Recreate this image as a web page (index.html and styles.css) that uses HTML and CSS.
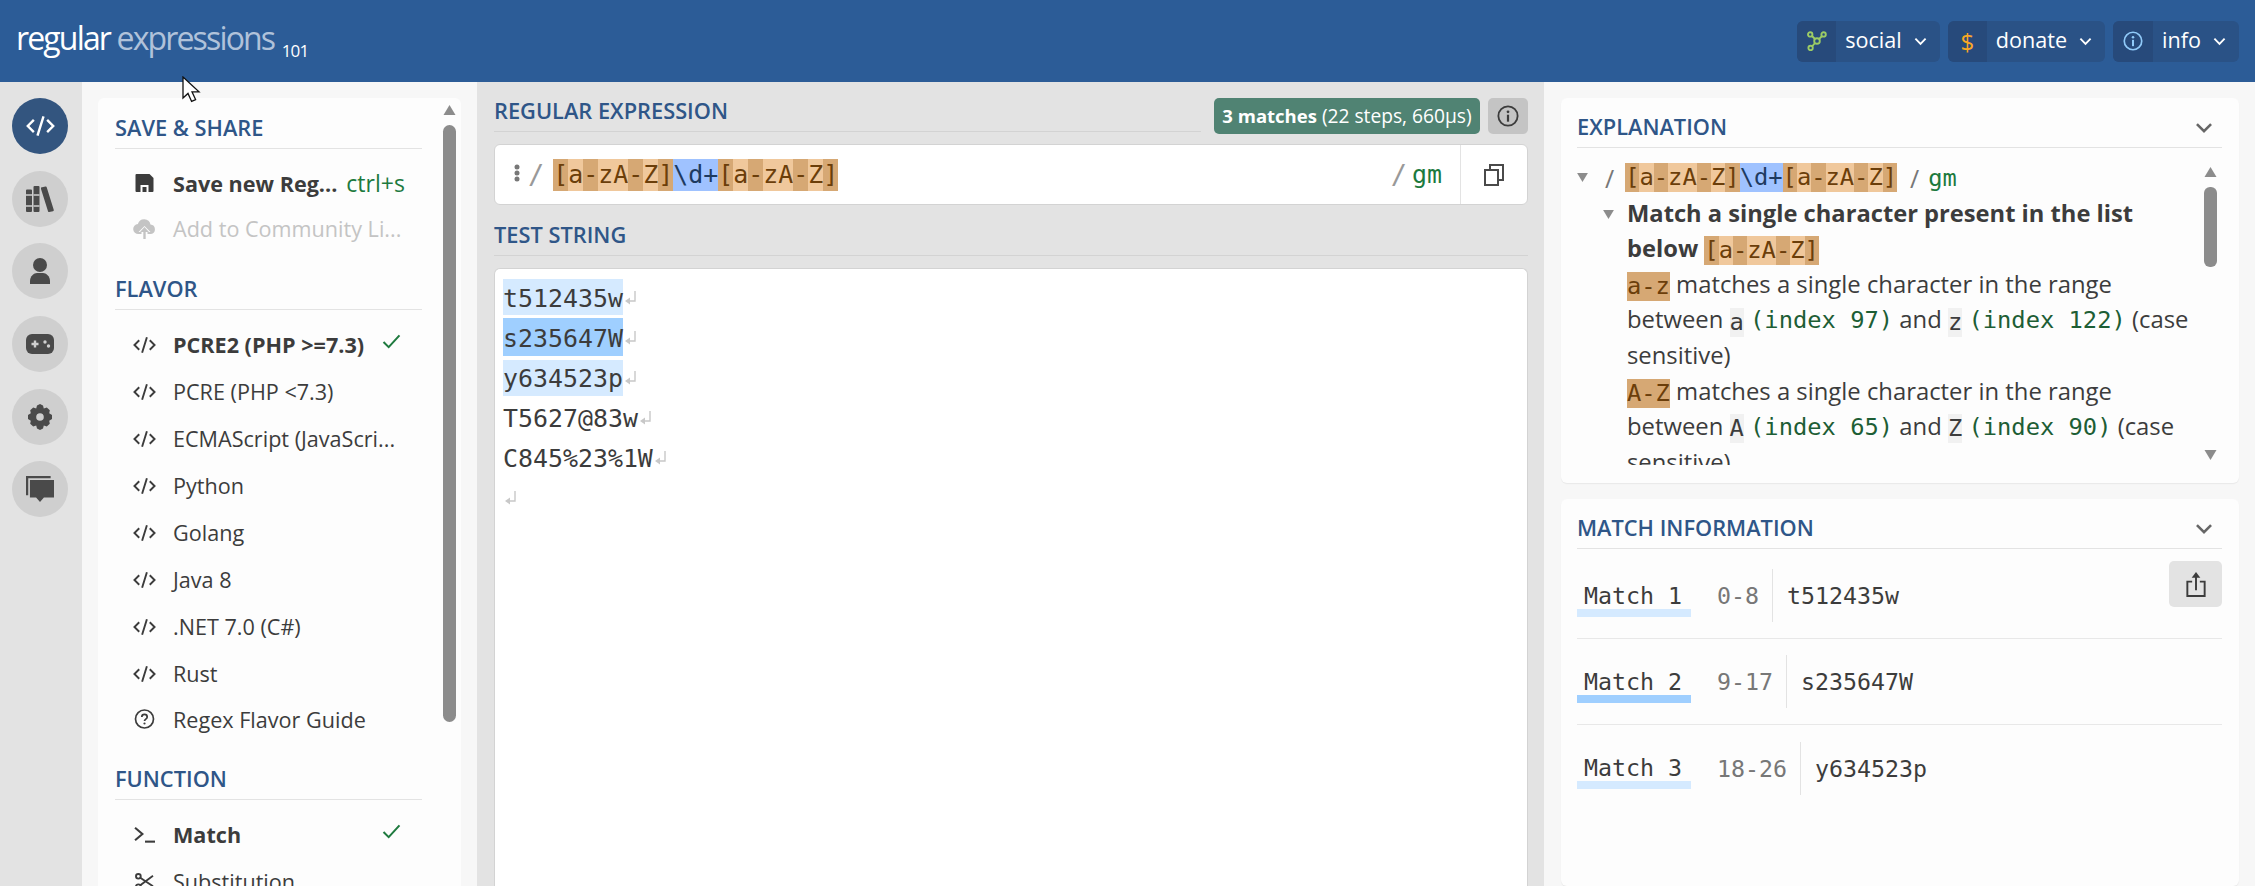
FILE: index.html
```html
<!DOCTYPE html>
<html lang="en">
<head>
<meta charset="utf-8">
<title>regex101</title>
<link rel="stylesheet" href="styles.css">
</head>
<body>
<svg class="defs" width="0" height="0" aria-hidden="true">
  <symbol id="i-code" viewBox="0 0 24 18"><path d="M6.5 4 1.5 9l5 5M17.5 4l5 5-5 5M14.5 1l-5 16" fill="none" stroke="currentColor" stroke-width="2"/></symbol>
  <symbol id="i-check" viewBox="0 0 20 16"><path d="M1.5 8.5 7 14 18.5 1.5" fill="none" stroke="currentColor" stroke-width="2.2"/></symbol>
  <symbol id="i-info" viewBox="0 0 24 24"><circle cx="12" cy="12" r="10.5" fill="none" stroke="currentColor" stroke-width="2"/><circle cx="12" cy="7.4" r="1.5" fill="currentColor"/><rect x="10.8" y="10.6" width="2.4" height="7.6" fill="currentColor"/></symbol>
  <symbol id="i-chev" viewBox="0 0 14 9"><path d="M1.5 1.5 7 7l5.5-5.5" fill="none" stroke="currentColor" stroke-width="2"/></symbol>
  <symbol id="i-tri" viewBox="0 0 12 10"><path d="M0 0h12L6 10z" fill="currentColor"/></symbol>
  <symbol id="i-ret" viewBox="0 0 11 14"><path d="M10 0v10H2" fill="none" stroke="currentColor" stroke-width="1.400"/><path d="M5 6.500v7L0 10z" fill="currentColor"/></symbol>
</svg>

<header class="topbar">
  <div class="logo"><span class="logo-a">regular</span> <span class="logo-b">expressions</span> <span class="logo-c">101</span></div>
  <nav class="topnav">
    <div class="tbtn">
      <span class="tbtn-ic"><svg class="ic-social" viewBox="0 0 20 20"><g fill="none" stroke="currentColor" stroke-width="1.9"><circle cx="3.2" cy="3.4" r="2.2"/><circle cx="16.6" cy="3.4" r="2.2"/><circle cx="3.6" cy="17" r="2.2"/><circle cx="10" cy="10" r="2.8"/><path d="M5 5l3 3M15 5l-3 3.2M5 15.5l3-3.5"/></g></svg></span>
      <span class="tbtn-lb">social</span>
      <svg class="tbtn-ch"><use href="#i-chev"/></svg>
    </div>
    <div class="tbtn">
      <span class="tbtn-ic ic-dollar">$</span>
      <span class="tbtn-lb">donate</span>
      <svg class="tbtn-ch"><use href="#i-chev"/></svg>
    </div>
    <div class="tbtn">
      <span class="tbtn-ic tbtn-ic-wide"><svg class="ic-infotop"><use href="#i-info"/></svg></span>
      <span class="tbtn-lb">info</span>
      <svg class="tbtn-ch"><use href="#i-chev"/></svg>
    </div>
  </nav>
</header>

<svg class="cursor" viewBox="0 0 20 28"><path d="M1 1v21l5-4.600 3.600 8 4-1.800-3.600-7.800 7 0z" fill="#fff" stroke="#111" stroke-width="1.300"/></svg>

<main class="layout">
  <aside class="rail">
    <div class="rail-btn rail-on"><svg class="rail-code"><use href="#i-code"/></svg></div>
    <div class="rail-btn"><svg class="rail-ic" viewBox="0 0 28 26"><path fill="currentColor" d="M0 4.500a1 1 0 0 1 1-1h4a1 1 0 0 1 1 1V25a1 1 0 0 1-1 1H1a1 1 0 0 1-1-1zM7.500 1a1 1 0 0 1 1-1h4a1 1 0 0 1 1 1v24a1 1 0 0 1-1 1h-4a1 1 0 0 1-1-1zM15 1.500l4.500-1a1 1 0 0 1 1.200.8L27.800 24a1 1 0 0 1-.8 1.200l-3.800.8a1 1 0 0 1-1.200-.8L15 3z"/><path stroke="#cfcfcf" stroke-width="1.500" d="M0 9h6M0 20h6M7.500 9h6M7.500 20h6"/></svg></div>
    <div class="rail-btn"><svg class="rail-ic rail-user" viewBox="0 0 20 26"><circle cx="10" cy="7" r="7" fill="currentColor"/><path fill="currentColor" d="M0 26v-3c0-5 4-8 7-8h6c3 0 7 3 7 8v3z"/></svg></div>
    <div class="rail-btn"><svg class="rail-ic" viewBox="0 0 28 20"><rect width="28" height="20" rx="6" fill="currentColor"/><path stroke="#cfcfcf" stroke-width="2.400" d="M5.500 10h7M9 6.500v7"/><circle cx="19" cy="8" r="1.700" fill="#cfcfcf"/><circle cx="22.500" cy="12" r="1.700" fill="#cfcfcf"/></svg></div>
    <div class="rail-btn"><svg class="rail-ic rail-cog" viewBox="0 0 24 26"><path fill="currentColor" fill-rule="evenodd" d="M12 0l3 1.500.8 3 3-.9 3 2.600-.6 3.100L24 11v4l-2.800 1.700.6 3.100-3 2.600-3-.9-.8 3L12 26l-3-1.500-.8-3-3 .9-3-2.600.6-3.100L0 15v-4l2.800-1.700-.6-3.100 3-2.600 3 .9.8-3zM12 9.200a3.800 3.800 0 1 0 0 7.600 3.800 3.800 0 0 0 0-7.600z"/></svg></div>
    <div class="rail-btn"><svg class="rail-ic" viewBox="0 0 25 23"><path fill="currentColor" d="M3.500 3.500H25v15.500h-9l-3.500 4-3.500-4H3.500z"/><path fill="currentColor" d="M0 0h22v2H2v15H0z"/></svg></div>
  </aside>

  <section class="side">
    <div class="side-card">
      <div class="scroll-up"><svg><use href="#i-tri"/></svg></div>
      <div class="scroll-thumb"></div>

      <h2 class="hd">SAVE &amp; SHARE</h2>
      <ul class="list">
        <li class="item item-save"><svg class="it-ic it-sm" viewBox="0 0 18 18"><path fill="currentColor" fill-rule="evenodd" d="M1 0h13l4 4v13a1 1 0 0 1-1 1H1a1 1 0 0 1-1-1V1a1 1 0 0 1 1-1zm4 11v7h8v-7z"/><rect x="7" y="13" width="4" height="5" fill="currentColor"/></svg><b class="it-bold">Save new Reg...</b><span class="kbd">ctrl+s</span></li>
        <li class="item item-add"><svg class="it-ic it-cloud" viewBox="0 0 22 20"><path fill="currentColor" d="M5 15a5 5 0 0 1-.6-10A6.500 6.500 0 0 1 17 5.500 4.800 4.800 0 0 1 17.500 15H14v-2h3l-6-6-6 6h3v2z"/><path fill="currentColor" d="M9.800 11h2.400v9H9.800z"/><path fill="currentColor" d="M11 8l4.500 5h-9z"/></svg><span>Add to Community Li...</span></li>
      </ul>

      <h2 class="hd hd-next">FLAVOR</h2>
      <ul class="list">
        <li class="item"><svg class="it-ic it-code"><use href="#i-code"/></svg><b class="it-bold">PCRE2 (PHP &gt;=7.3)</b><svg class="it-check"><use href="#i-check"/></svg></li>
        <li class="item"><svg class="it-ic it-code"><use href="#i-code"/></svg><span>PCRE (PHP &lt;7.3)</span></li>
        <li class="item"><svg class="it-ic it-code"><use href="#i-code"/></svg><span>ECMAScript (JavaScri...</span></li>
        <li class="item"><svg class="it-ic it-code"><use href="#i-code"/></svg><span>Python</span></li>
        <li class="item"><svg class="it-ic it-code"><use href="#i-code"/></svg><span>Golang</span></li>
        <li class="item"><svg class="it-ic it-code"><use href="#i-code"/></svg><span>Java 8</span></li>
        <li class="item"><svg class="it-ic it-code"><use href="#i-code"/></svg><span>.NET 7.0 (C#)</span></li>
        <li class="item"><svg class="it-ic it-code"><use href="#i-code"/></svg><span>Rust</span></li>
        <li class="item item-guide"><svg class="it-ic it-help" viewBox="0 0 20 20"><circle cx="10" cy="10" r="9" fill="none" stroke="currentColor" stroke-width="1.700"/><path d="M7.300 8c0-3.400 5.400-3.400 5.400 0 0 2.200-2.700 2-2.700 4" fill="none" stroke="currentColor" stroke-width="1.700"/><circle cx="10" cy="14.500" r="1.100" fill="currentColor"/></svg><span>Regex Flavor Guide</span></li>
      </ul>

      <h2 class="hd hd-next">FUNCTION</h2>
      <ul class="list">
        <li class="item"><svg class="it-ic it-term" viewBox="0 0 20 16"><path d="M1 1.500 8 7.500l-7 6" fill="none" stroke="currentColor" stroke-width="2"/><path d="M10.500 14.800H20" stroke="currentColor" stroke-width="2"/></svg><b class="it-bold">Match</b><svg class="it-check"><use href="#i-check"/></svg></li>
        <li class="item"><svg class="it-ic it-term" viewBox="0 0 20 18"><circle cx="3.500" cy="3.500" r="2.500" fill="none" stroke="currentColor" stroke-width="2"/><circle cx="3.500" cy="14.500" r="2.500" fill="none" stroke="currentColor" stroke-width="2"/><path d="M5.500 5 19 14M5.500 13 19 3" stroke="currentColor" stroke-width="2"/></svg><span>Substitution</span></li>
      </ul>
    </div>
  </section>

  <section class="mid">
    <div class="mid-top">
      <h2 class="hd hd-grow">REGULAR EXPRESSION</h2>
      <div class="badge"><b>3 matches</b> (22 steps, 660µs)</div>
      <div class="info-btn"><svg><use href="#i-info"/></svg></div>
    </div>
    <div class="regex-box">
      <svg class="dots" viewBox="0 0 6 18"><circle cx="3" cy="3" r="2.500"/><circle cx="3" cy="9" r="2.500"/><circle cx="3" cy="15" r="2.500"/></svg>
      <span class="slash slash-open">/</span>
      <div class="regex-text mono"><span class="d">[</span><span class="l">a</span><span class="d">-</span><span class="l">zA</span><span class="d">-</span><span class="l">Z</span><span class="d">]</span><span class="b">\d+</span><span class="d">[</span><span class="l">a</span><span class="d">-</span><span class="l">zA</span><span class="d">-</span><span class="l">Z</span><span class="d">]</span></div>
      <span class="slash slash-close">/</span>
      <span class="flags mono">gm</span>
      <div class="copy"><svg viewBox="0 0 20 22"><path fill="none" stroke="currentColor" stroke-width="2" d="M1 6h13v15H1zM6 6V1h13v15h-5"/></svg></div>
    </div>
    <h2 class="hd hd-test">TEST STRING</h2>
    <div class="test-box mono">
      <div class="line"><span class="m m1">t512435w</span><svg class="ret"><use href="#i-ret"/></svg></div>
      <div class="line"><span class="m m2">s235647W</span><svg class="ret"><use href="#i-ret"/></svg></div>
      <div class="line"><span class="m m3">y634523p</span><svg class="ret"><use href="#i-ret"/></svg></div>
      <div class="line"><span>T5627@83w</span><svg class="ret"><use href="#i-ret"/></svg></div>
      <div class="line"><span>C845%23%1W</span><svg class="ret"><use href="#i-ret"/></svg></div>
      <div class="line"><svg class="ret"><use href="#i-ret"/></svg></div>
    </div>
  </section>

  <section class="right">
    <div class="rcard rcard-ex">
      <h2 class="hd hd-ch">EXPLANATION<svg class="card-ch"><use href="#i-chev"/></svg></h2>
      <div class="ex-scroll">
        <div class="ex-sb ex-up"><svg><use href="#i-tri"/></svg></div>
        <div class="ex-thumb"></div>
        <div class="ex-sb ex-down"><svg><use href="#i-tri"/></svg></div>
        <div class="ex-line ex-root">
          <svg class="tri tri-root"><use href="#i-tri"/></svg>
          <span class="ex-slash">/</span>
          <span class="mono ex-re"><span class="d">[</span><span class="l">a</span><span class="d">-</span><span class="l">zA</span><span class="d">-</span><span class="l">Z</span><span class="d">]</span><span class="b">\d+</span><span class="d">[</span><span class="l">a</span><span class="d">-</span><span class="l">zA</span><span class="d">-</span><span class="l">Z</span><span class="d">]</span></span>
          <span class="ex-slash ex-slash-end">/</span>
          <span class="mono ex-flags">gm</span>
        </div>
        <div class="ex-body">
          <svg class="tri tri-sub"><use href="#i-tri"/></svg>
          <div class="ex-row ex-bold">Match a single character present in the list</div>
          <div class="ex-row"><b class="ex-bold">below</b> <span class="mono ex-re"><span class="d">[</span><span class="l">a</span><span class="d">-</span><span class="l">zA</span><span class="d">-</span><span class="l">Z</span><span class="d">]</span></span></div>
          <div class="ex-row"><span class="mono rng">a-z</span> matches a single character in the range</div>
          <div class="ex-row">between <span class="mono ch">a</span> <span class="mono gr">(index 97)</span> and <span class="mono ch">z</span> <span class="mono gr">(index 122)</span> (case</div>
          <div class="ex-row">sensitive)</div>
          <div class="ex-row"><span class="mono rng">A-Z</span> matches a single character in the range</div>
          <div class="ex-row">between <span class="mono ch">A</span> <span class="mono gr">(index 65)</span> and <span class="mono ch">Z</span> <span class="mono gr">(index 90)</span> (case</div>
          <div class="ex-row">sensitive)</div>
        </div>
      </div>
    </div>
    <div class="rcard rcard-mi">
      <h2 class="hd hd-ch">MATCH INFORMATION<svg class="card-ch"><use href="#i-chev"/></svg></h2>
      <div class="share"><svg viewBox="0 0 20 26"><path fill="none" stroke="currentColor" stroke-width="2" d="M6 10H1v15h18V10h-5M10 19V2"/><path fill="currentColor" d="M10 0l4.500 6h-9z"/></svg></div>
      <div class="mrows">
        <div class="mrow mono"><span class="mlabel ml-a">Match 1</span><span class="mrange">0-8</span><span class="mval">t512435w</span></div>
        <div class="mrow mono"><span class="mlabel ml-b">Match 2</span><span class="mrange">9-17</span><span class="mval">s235647W</span></div>
        <div class="mrow mono mrow-last"><span class="mlabel ml-a">Match 3</span><span class="mrange">18-26</span><span class="mval">y634523p</span></div>
      </div>
    </div>
  </section>
</main>
</body>
</html>
```

FILE: styles.css
```css
* { box-sizing: border-box; }
html, body { margin: 0; height: 886px; overflow: hidden; }
body { font-family: "Open Sans", sans-serif; font-size: 21.6px; color: #3c3c3c; background: #f7f7f7; position: relative; }
.defs { position: absolute; }
.mono { font-family: "DejaVu Sans Mono", monospace; font-size: 23.25px; }
h2, ul, p { margin: 0; padding: 0; font-weight: 400; }
ul { list-style: none; }

.topbar { height: 82px; background: #2c5c97; display: flex; align-items: center; justify-content: space-between; padding: 0 16px; }
.logo { font-size: 32px; letter-spacing: -1.85px; color: #fff; white-space: nowrap; margin-top: -7px; }
.logo-b { color: #b0c2da; }
.logo-c { font-size: 17px; letter-spacing: -.8px; margin-left: 1px; position: relative; top: 7px; }
.topnav { display: flex; gap: 8px; }
.tbtn { height: 41px; display: flex; align-items: center; background: #2a5286; border-radius: 6px; color: #fff; overflow: hidden; }
.tbtn-ic { width: 39px; height: 41px; background: #274a7b; display: flex; align-items: center; justify-content: center; }
.tbtn-ic-wide { width: 40px; }
.tbtn-lb { padding: 0 12px 3px 9px; }
.tbtn-ch { width: 13px; height: 9px; margin-right: 13px; }
.ic-social { width: 20px; height: 20px; color: #9ccc65; }
.ic-dollar { color: #f9a825; font-size: 24px; }
.ic-infotop { width: 20px; height: 20px; color: #90caf9; }
.cursor { position: absolute; left: 182px; top: 76px; width: 20px; height: 28px; z-index: 5; }

.layout { display: grid; grid-template-columns: 82px 395px 1067px 711px; height: 804px; }
.rail { background: #e3e3e3; display: flex; flex-direction: column; align-items: center; gap: 16.67px; padding: 16px 2px 0 0; }
.rail-btn { width: 56px; height: 56px; border-radius: 50%; background: #cfcfcf; color: #4a4a4a; display: flex; align-items: center; justify-content: center; flex: none; }
.rail-on { background: #33557f; color: #fff; }
.rail-code { width: 29px; height: 22px; }
.rail-ic { width: 28px; height: 26px; }
.rail-user { width: 20px; }
.rail-cog { width: 24px; }

.side { padding: 16px 16px 0; overflow: hidden; }
.side-card { height: 900px; background: #fdfdfd; border-radius: 6px 6px 0 0; padding: 17px 39px 0 17px; position: relative; }
.scroll-up { position: absolute; right: 4px; top: 7px; width: 15px; height: 10px; color: #8c8c8c; }
.scroll-up svg { display: block; width: 15px; height: 10px; transform: scaleY(-1); }
.scroll-thumb { position: absolute; right: 5px; top: 27px; width: 13px; height: 597px; background: #8c8c8c; border-radius: 7px; }

.hd { font-size: 21.8px; font-weight: 600; line-height: 25px; height: 34px; color: #2f5688; border-bottom: 1px solid #e3e3e3; white-space: nowrap; }
.hd-next { margin-top: 25px; }
.list { margin-top: 11px; }
.item { height: 47px; display: flex; align-items: center; padding-left: 18px; white-space: nowrap; position: relative; }
.item-save { height: 46px; }
.item-add { height: 45px; color: #c4c4c4; }
.item-guide { height: 44px; }
.it-ic { width: 23px; flex: none; margin-right: 17px; color: #3c3c3c; }
.it-code { height: 18px; }
.it-sm { height: 18px; padding: 0 2px; }
.it-cloud { height: 20px; color: #c4c4c4; }
.it-help { height: 20px; }
.it-term { height: 17px; padding: 0 1px; }
.it-bold { font-weight: 700; }
.kbd { color: #1c7a3e; margin-left: 9px; font-size: 23px; }
.it-check { position: absolute; left: 267px; top: 13px; width: 19px; height: 15px; color: #1f7a3f; }

.mid { background: #e3e3e3; padding: 16px 16px 0 17px; display: flex; flex-direction: column; }
.mid-top { display: flex; align-items: flex-start; }
.hd-grow { flex: 1; border-bottom-color: #d3d3d3; margin-right: 13px; }
.badge { height: 36px; line-height: 36px; width: 266px; text-align: center; background: #508373; color: #fff; font-size: 19.2px; border-radius: 5px; white-space: nowrap; }
.badge b { font-size: 18.5px; }
.info-btn { width: 40px; height: 36px; margin-left: 8px; background: #c4c4c4; border-radius: 5px; display: flex; align-items: center; justify-content: center; }
.info-btn svg { width: 22px; height: 22px; color: #3c3c3c; }

.regex-box { margin-top: 10px; height: 61px; background: #fff; border: 1px solid #d3d3d3; border-radius: 6px; display: flex; align-items: center; padding-left: 19px; }
.dots { width: 6px; height: 18px; fill: #777; margin-top: -4px; }
.slash { color: #999; font-family: "DejaVu Sans Mono", monospace; font-size: 27px; }
.slash-open { margin-left: 8px; margin-right: 9px; }
.regex-text { font-size: 24.9px; height: 32px; line-height: 32px; display: flex; flex: none; }
.d, .l, .b { display: inline-block; height: 100%; }
.d { background: #d6a874; color: #6b3e0a; }
.l { background: #f0c89c; color: #6b3e0a; }
.b { background: #9fc2ff; color: #1e3a5f; }
.slash-close { margin-left: auto; margin-right: 5px; }
.flags { font-size: 24.9px; color: #1c7a3e; width: 30px; }
.copy { width: 67px; height: 59px; border-left: 1px solid #e3e3e3; margin-left: 18px; display: flex; align-items: center; justify-content: center; color: #4a4a4a; }
.copy svg { width: 20px; height: 22px; }

.hd-test { margin-top: 17px; border-bottom-color: #d3d3d3; }
.test-box { font-size: 24.9px; margin-top: 12px; flex: 1; background: #fff; border: 1px solid #d3d3d3; border-bottom: 0; border-radius: 6px 6px 0 0; padding: 9px 0 0 8px; color: #3c3c3c; }
.line { height: 40px; line-height: 42px; display: flex; align-items: stretch; }
.m { background-repeat: no-repeat; }
.m1 { background-image: linear-gradient(#d5eaff, #d5eaff); background-size: 100% 36px; background-position: 0 1px; }
.m2 { background-image: linear-gradient(#9fcfff, #9fcfff); background-size: 100% 38px; background-position: 0 0; }
.m3 { background-image: linear-gradient(#d5eaff, #d5eaff); background-size: 100% 36px; background-position: 0 2px; }
.ret { color: #c8c8c8; width: 11px; height: 14px; margin-left: 2px; align-self: center; }

.right { padding: 16px 16px 0 17px; display: flex; flex-direction: column; gap: 16px; overflow: hidden; }
.rcard { background: #fdfdfd; border-radius: 6px; padding: 16px 17px 0 16px; box-shadow: 0 1px 1px #e8e8e8; position: relative; overflow: hidden; }
.rcard-ex { height: 385px; flex: none; }
.rcard-mi { height: 387px; flex: none; }
.hd-ch { position: relative; }
.card-ch { position: absolute; right: 9px; top: 8px; width: 18px; height: 12px; color: #666; }

.ex-scroll { position: relative; height: 305px; margin-top: 12px; overflow: hidden; }
.ex-sb { position: absolute; left: 626px; width: 15px; height: 10px; color: #8c8c8c; z-index: 1; }
.ex-sb svg { display: block; width: 15px; height: 10px; }
.ex-up { top: 7px; }
.ex-up svg { transform: scaleY(-1); }
.ex-down { top: 290px; }
.ex-thumb { position: absolute; left: 627px; top: 27px; width: 13px; height: 80px; background: #8c8c8c; border-radius: 6px; z-index: 1; }

.ex-line { height: 35.6px; display: flex; align-items: center; white-space: nowrap; }
.tri { width: 11px; height: 9px; color: #8c8c8c; flex: none; }
.ex-slash { color: #777; font-size: 25px; margin-left: 17px; }
.ex-slash-end { margin-left: 13px; }
.ex-re { font-size: 23.75px; display: inline-flex; height: 29px; line-height: 29px; vertical-align: middle; margin-left: 11px; }
.ex-flags { font-size: 23.75px; color: #1c7a3e; margin-left: 9px; }
.ex-body { position: relative; padding-left: 50px; }
.tri-sub { position: absolute; left: 26px; top: 14px; }
.ex-row { height: 35.6px; font-size: 23.85px; line-height: 35.6px; white-space: nowrap; }
.ex-bold { font-weight: 700; font-size: 23.7px; }
.ex-row .ex-re { margin-left: 0; }
.rng { font-size: 23.75px; display: inline-block; height: 29px; line-height: 29px; background: #d6a874; color: #6b3e0a; vertical-align: middle; }
.ch { font-size: 23.75px; display: inline-block; height: 29px; line-height: 29px; background: #f1f1f1; vertical-align: middle; }
.gr { font-size: 23.75px; color: #1d5e35; }

.share { position: absolute; right: 17px; top: 62px; width: 53px; height: 46px; background: #e3e3e3; border-radius: 5px; display: flex; align-items: center; justify-content: center; color: #3c3c3c; }
.share svg { width: 20px; height: 25px; }
.mrows { margin-top: 4px; }
.mrow { height: 86px; border-bottom: 1px solid #e8e8e8; display: flex; align-items: center; }
.mrow-last { border-bottom: 0; }
.mlabel { width: 114px; padding: 0 7px; margin-right: 26px; height: 44px; line-height: 44px; color: #3c3c3c; background-repeat: no-repeat; background-size: 100% 8px; background-position: 0 35px; }
.ml-a { background-image: linear-gradient(#d5eaff, #d5eaff); }
.ml-b { background-image: linear-gradient(#9fcfff, #9fcfff); }
.mrange { color: #777; height: 53px; line-height: 53px; padding-right: 13px; border-right: 1px solid #e3e3e3; }
.mval { padding-left: 14px; color: #3c3c3c; }
```
